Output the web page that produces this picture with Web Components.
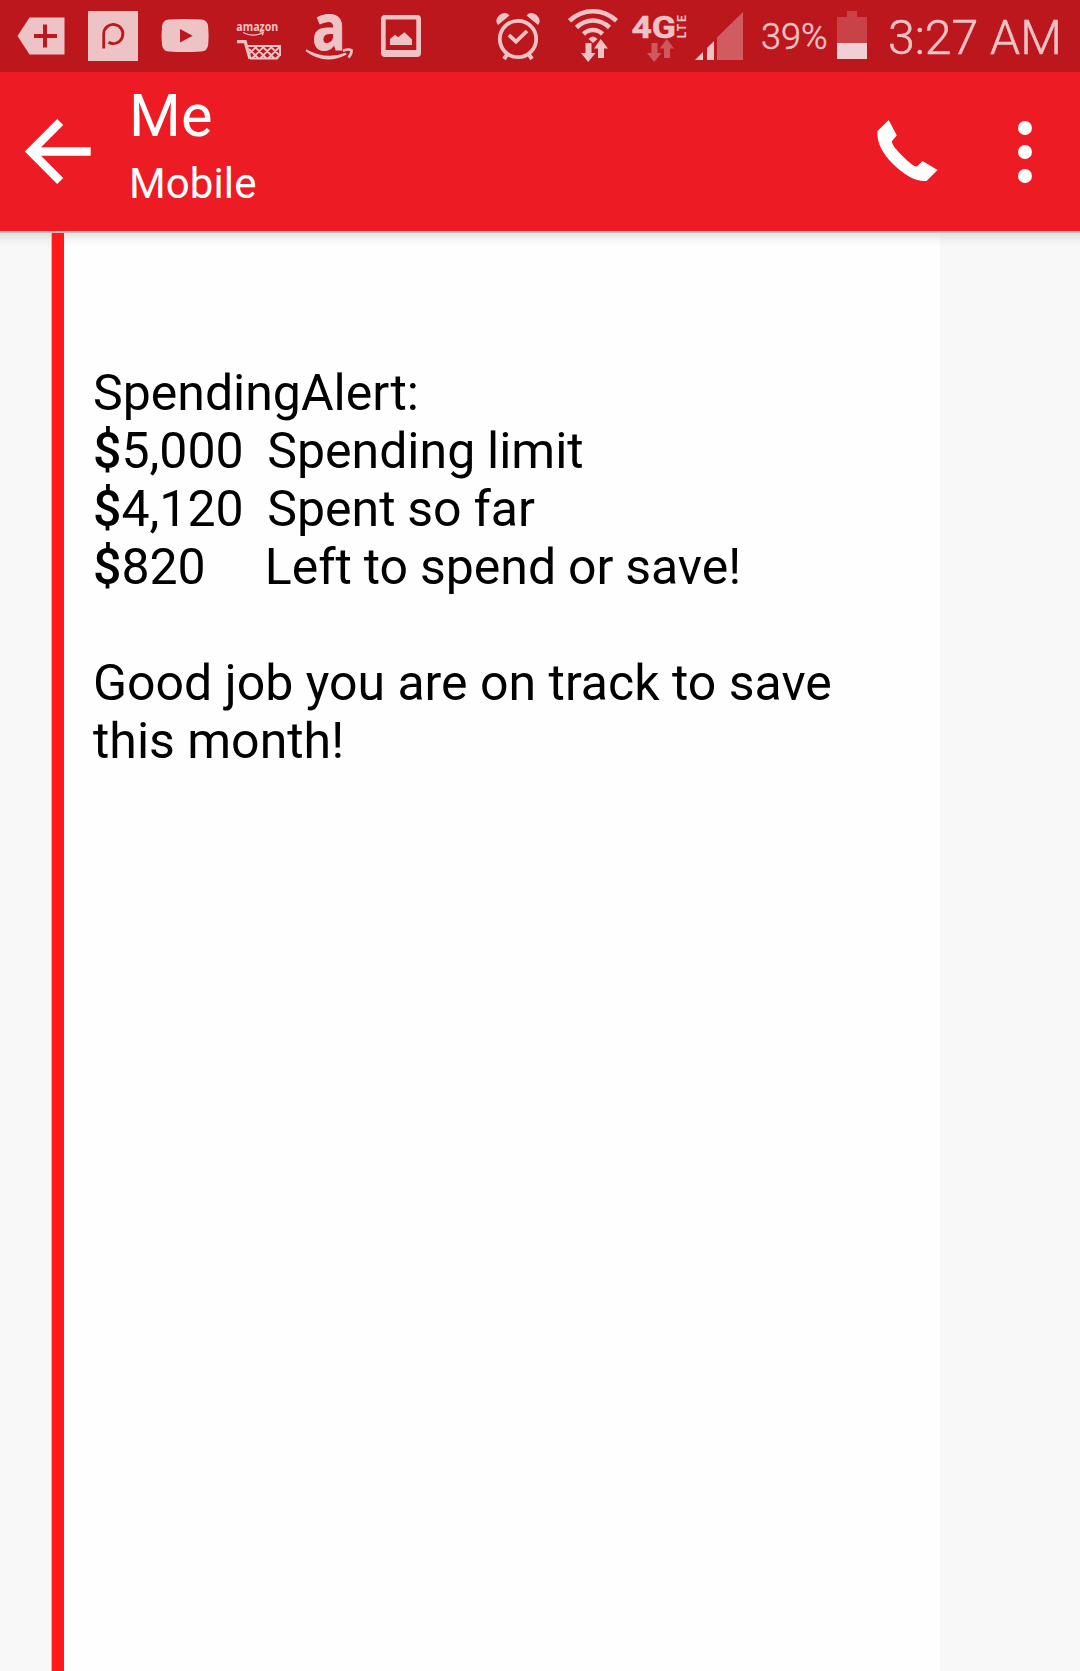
<!DOCTYPE html>
<html lang="en">
<head>
<meta charset="utf-8">
<title>Messages</title>
<style>
  html, body { margin: 0; height: 100%; overflow: hidden; background: #f7f7f7; font-family: Roboto, sans-serif; }
</style>
</head>
<body>
<message-screen></message-screen>

<template id="t-screen">
  <style>
    :host { display: flex; flex-direction: column; width: 1080px; height: 1671px; background: #f7f7f7; }
    .rows { word-spacing: -.6px; }
    b { font-weight: 500; }
  </style>
  <status-bar></status-bar>
  <app-header><span slot="title">Me</span><span slot="subtitle">Mobile</span></app-header>
  <message-body><span class="rows">SpendingAlert:
<b>$</b>5,000  Spending limit
<b>$</b>4,120  Spent so far
<b>$</b>820     Left to spend or save!</span>

Good job you are on track to save
this month!</message-body>
</template>

<template id="t-status">
  <style>
    :host { display: flex; flex: none; height: 72px; box-sizing: border-box; justify-content: space-between; background: #bc171d; color: #edc3c6; }
    .left { display: flex; gap: 22px; padding-left: 16px; }
    .right { display: flex; padding-right: 19px; }
    svg { display: block; flex: none; height: 72px; fill: currentColor; overflow: visible; }
    .left svg { width: 50px; }
    .alarm { width: 52px; } .wifi { width: 56px; margin-left: 20px; }
    .net { width: 60px; margin-left: 9px; } .sig { width: 52px; margin-left: 3px; }
    .pct, .time { font-weight: 300; line-height: 75px; white-space: nowrap; -webkit-text-stroke: .5px currentColor; }
    .pct { width: 71px; margin-left: 16px; font-size: 36px; }
    .bat { width: 34px; margin-left: 3px; }
    .time { width: 173px; margin-left: 19px; font-size: 48.200px; }
  </style>
  <div class="left">
    <svg viewBox="16 0 50 72"><path d="M17.5 36 29.5 17.5H64.5V54.5H29.5Z"/><path d="M45 24.5V47.5M34 36H57" fill="none" stroke="#bc171d" stroke-width="4"/></svg>
    <svg viewBox="88 0 50 72"><path d="M88 11h50v50H88z"/><path d="M103.7 48.5V34a9.6 9.6 0 1 1 4.8 8.3" fill="none" stroke="#bc171d" stroke-width="2.8"/></svg>
    <svg viewBox="160 0 50 72"><path d="M169 19.6Q185 18.4 201 19.6Q207.8 20 208.2 27Q209 35.500 208.200 44.500Q207.800 51 201 51.500Q185 52.600 169 51.500Q162.400 51 162 44.500Q161 35.500 162 27Q162.400 20 169 19.600Z"/><path d="M180 29v13.500l12.700-6.800z" fill="#bc171d"/></svg>
    <svg viewBox="232 0 50 72">
      <text x="236.300" y="31" font-family="Open Sans, sans-serif" font-weight="700" font-size="13" textLength="42" lengthAdjust="spacingAndGlyphs">amazon</text>
      <path d="M243 32.500Q253 37.800 263.500 32.500M259.500 31.700l4 .3-1.200 3.200" fill="none" stroke="currentColor" stroke-width="1.300"/>
      <path d="M237 41.700H245.200L250 58.800" fill="none" stroke="currentColor" stroke-width="3.200"/>
      <path d="M247 46H280V56" fill="none" stroke="currentColor" stroke-width="2"/>
      <path d="M249 49l10 10M254 46l13 13M262 46l13 13M270 46l10 10M278 46l2 2M250 53l7-7M251.500 59l13-13M259.500 59l13-13M267.500 59l12.500-12.500M275.500 59l4.500-4.500M250 58.500H277L280 55" fill="none" stroke="currentColor" stroke-width="1.800"/>
    </svg>
    <svg viewBox="304 0 50 72">
      <text x="312" y="49.500" font-family="Open Sans, sans-serif" font-weight="700" font-size="65" textLength="34" lengthAdjust="spacingAndGlyphs" stroke="currentColor" stroke-width=".8">a</text>
      <path d="M306 49.300Q326 60.300 345.500 52.800L346.800 54.500Q325 66 305.800 51.200Z"/><path d="M343 50.700Q348.500 48.700 351.500 50.200Q352 54 348.500 57.500" fill="none" stroke="currentColor" stroke-width="2.600"/>
    </svg>
    <svg viewBox="376 0 50 72"><path fill-rule="evenodd" d="M385 15h32q4 0 4 4v34q0 4-4 4h-32q-4 0-4-4V19q0-4 4-4zM385.700 19.500V50H416.300V19.500z"/><path d="M390 45v-6l5-4.300 3 2.500 6.500-5L412 39.500V45z"/></svg>
  </div>
  <div class="right">
    <svg class="alarm" viewBox="493 0 52 72"><g fill="none" stroke="currentColor"><circle cx="518" cy="39" r="18.200" stroke-width="3.800"/><path d="M509 35l7 6.700 11-10.700" stroke-width="3.800"/><path d="M507.500 54l-3.500 5M528.500 54l3.500 5" stroke-width="4"/></g><path d="M498 25Q494 20 499.500 15Q505.500 11 509.500 15.500zM538 25Q542 20 536.500 15Q530.500 11 526.500 15.500z"/></svg>
    <svg class="wifi" viewBox="565 0 56 72"><g fill="none" stroke="currentColor" stroke-width="4.600"><path d="M569.500 20.700Q580 11.300 593 11.300T616.500 20.700"/><path d="M576.500 27.500Q584 20.500 593 20.500T609.500 27.500"/><path d="M583.500 34Q587.500 30 593 30T602.500 34"/></g><path d="M588.500 39Q593 34 597.500 39L593 43z"/><g stroke="#bc171d" stroke-width="1.200" paint-order="stroke"><path d="M585.500 43h6v10h4l-7.300 9-7.200-9h4.500z"/><path d="M600.700 39l7.300 9.500h-4V58h-6V48.500h-4z"/></g></svg>
    <svg class="net" viewBox="630 0 60 72">
      <text x="631.500" y="37.800" font-family="Roboto, sans-serif" font-weight="700" font-size="30.500" textLength="44.500" lengthAdjust="spacingAndGlyphs" stroke="currentColor" stroke-width=".5">4G</text>
      <text transform="translate(686 38.300) rotate(-90)" font-family="Roboto, sans-serif" font-weight="700" font-size="12" textLength="23" lengthAdjust="spacing">LTE</text>
      <g opacity=".38"><path d="M651.500 43h6v10h4l-7.300 9-7.200-9h4.500z"/><path d="M666.800 39l7.200 9.500h-4V58h-6V48.500h-4.300z"/></g></svg>
    <svg class="sig" viewBox="693 0 52 72"><path d="M695 60l8-8v8zM707 60V48l7-7V60z"/><path opacity=".4" d="M717 60V37.500L743 12V60z"/></svg>
    <span class="pct">39%</span>
    <svg class="bat" viewBox="835 0 34 72"><path opacity=".25" d="M847 11h10v6h10v26h-30V17h10z"/><path fill="#f1cfd2" d="M837 43h30v16h-30z"/></svg>
    <span class="time">3:27 AM</span>
  </div>
</template>

<template id="t-header">
  <style>
    :host { display: flex; flex: none; height: 159px; box-sizing: border-box; background: #ed1c24; color: #fff; }
    svg { display: block; flex: none; fill: currentColor; height: 159px; }
    .back { width: 129px; }
    .names { flex: 1; display: flex; flex-direction: column; padding-top: 9px; }
    .title { font-size: 59.500px; line-height: 70px; }
    .sub { font-size: 42px; line-height: 50px; margin-top: 8px; letter-spacing: .1px; }
  </style>
  <svg class="back" viewBox="0 72 129 159"><path d="M60.200 122 30.800 151.500 60.200 181M32.500 151.500H90.700" fill="none" stroke="currentColor" stroke-width="8.500"/></svg>
  <div class="names"><div class="title"><slot name="title"></slot></div><div class="sub"><slot name="subtitle"></slot></div></div>
  <svg width="120" viewBox="860 72 120 159"><path d="M888.700 120 877.500 131Q876 147 893 164Q912 182.500 926.500 181L937.500 170 922.500 161 917 166.500Q914 167.500 904 157.500Q891 145 892 141L896.800 135.500Z"/></svg>
  <svg width="100" viewBox="980 72 100 159" fill="#f9f9f9"><circle cx="1025" cy="128" r="7"/><circle cx="1025" cy="152" r="7"/><circle cx="1025" cy="176" r="7"/></svg>
</template>

<template id="t-body">
  <style>
    :host { display: flex; flex-direction: column; flex: 1; background: #f7f7f7; }
    .edge { flex: none; height: 2px; background: #bdbdbd; }
    .area { flex: 1; display: flex; padding: 0 140px 0 52px; background: linear-gradient(rgba(0,0,0,.11), rgba(0,0,0,.03) 7px, transparent 15px) top / 100% 16px no-repeat, #f8f8f8; }
    .card { flex: 1; box-sizing: border-box; border-left: 12px solid #ff1919; padding: 131px 0 0 29px; box-shadow: -1px 0 #f9a5a5;
      background: linear-gradient(rgba(0,0,0,.11), rgba(0,0,0,.03) 7px, transparent 15px) top / 100% 16px no-repeat, #fefefe;
      background-origin: border-box; color: #000; font-size: 50px; line-height: 58px; white-space: pre; }
  </style>
  <div class="edge"></div>
  <div class="area"><div class="card"><slot></slot></div></div>
</template>

<script>
  const define = (name, templateId) => customElements.define(name, class extends HTMLElement {
    constructor() {
      super();
      this.attachShadow({ mode: 'open' }).append(document.getElementById(templateId).content.cloneNode(true));
    }
  });
  define('status-bar', 't-status');
  define('app-header', 't-header');
  define('message-body', 't-body');
  define('message-screen', 't-screen');
</script>
</body>
</html>
